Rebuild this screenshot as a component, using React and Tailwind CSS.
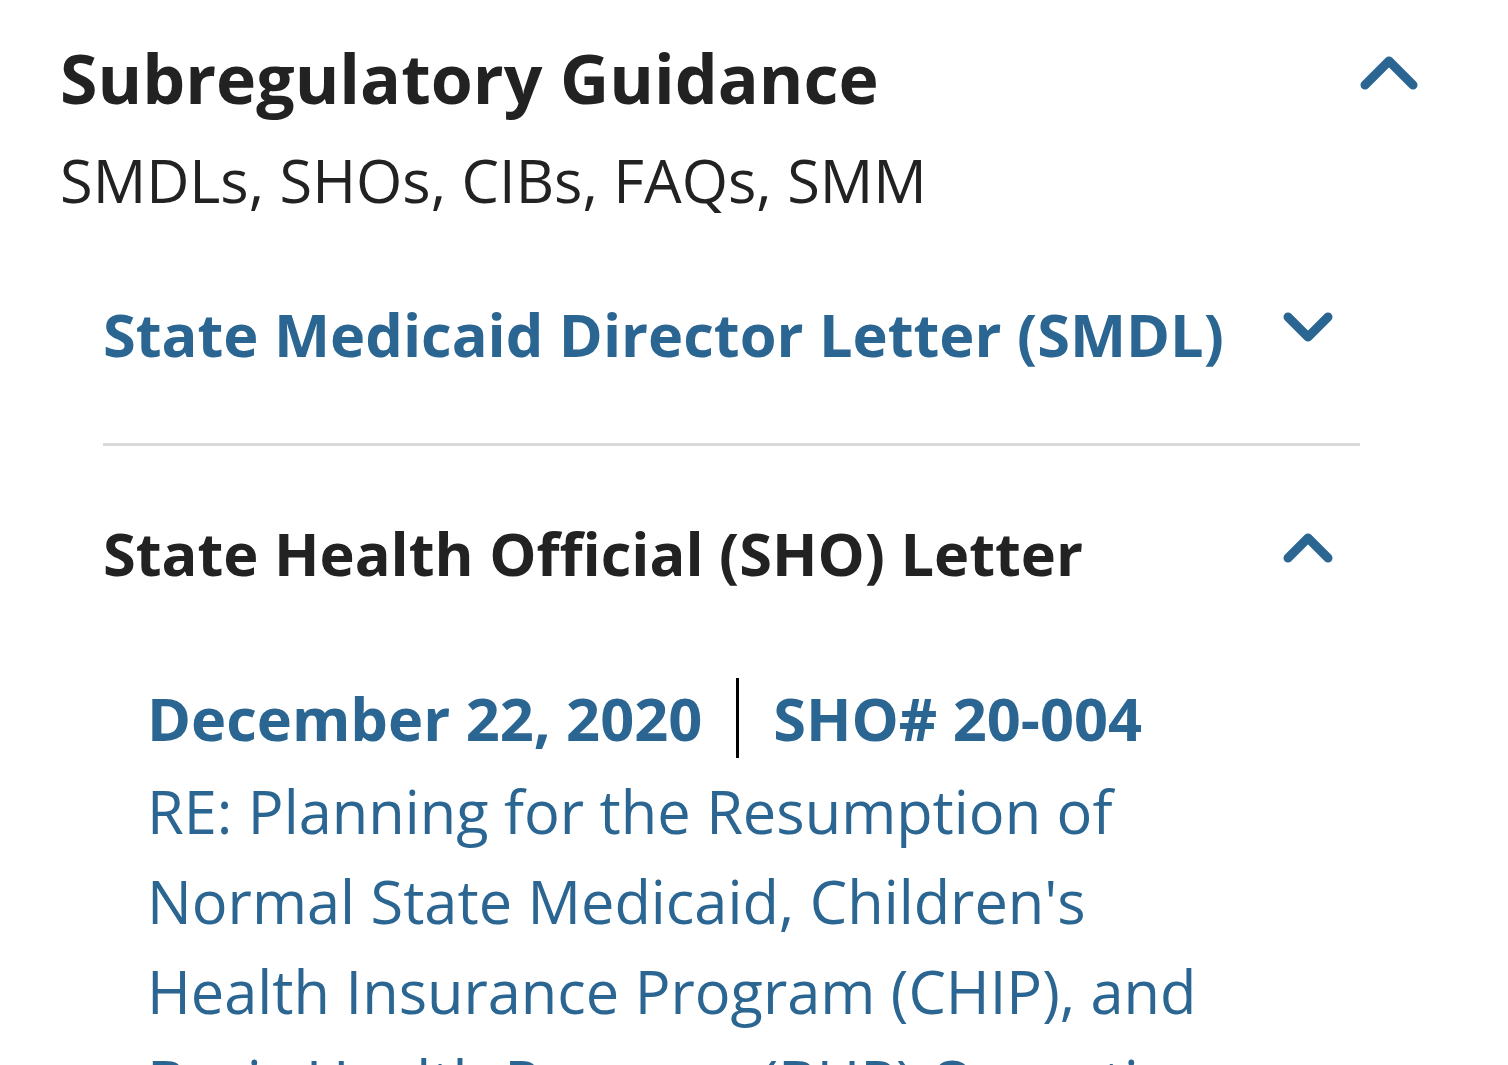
import React from "react";

const blue = "text-[#2b6591]";

function Chevron({ up = true, big = false }) {
  // chevron drawn as a thick rounded polyline
  const w = big ? 58 : 50;
  const h = big ? 35 : 31;
  const pts = up
    ? big
      ? "5,30 29,6 53,30"
      : "5,26 25,6 45,26"
    : big
    ? "5,5 29,29 53,5"
    : "5,5 25,25 45,5";
  return (
    <svg width={w} height={h} viewBox={`0 0 ${w} ${h}`} className="shrink-0">
      <polyline
        points={pts}
        fill="none"
        stroke="#2b6591"
        strokeWidth="9"
        strokeLinecap="round"
        strokeLinejoin="round"
      />
    </svg>
  );
}

export default function App() {
  return (
    <div className="min-h-screen bg-white font-['Open_Sans',sans-serif] text-[#222] pl-[60px] pr-[90px] pt-[38px] overflow-hidden h-[1065px]">
      {/* section header */}
      <div className="flex items-start justify-between">
        <h2 className="text-[68px] leading-[80px] font-bold">Subregulatory Guidance</h2>
        <div className="mt-[17px]">
          <Chevron up big />
        </div>
      </div>
      <p className="mt-[22px] text-[59.5px] leading-[80px]">SMDLs, SHOs, CIBs, FAQs, SMM</p>

      <div className="ml-[43px] mr-[58px] mt-[74px]">
        {/* collapsed item */}
        <div className="flex items-start justify-between pr-[27px] pb-[69px] border-b-[3px] border-[#d9d9d9]">
          <h3 className={`text-[59.5px] leading-[80px] font-bold ${blue}`}>
            State Medicaid Director Letter (SMDL)
          </h3>
          <div className="mt-[18px]">
            <Chevron up={false} />
          </div>
        </div>

        {/* expanded item */}
        <div className="mt-[67px] flex items-start justify-between pr-[27px]">
          <h3 className="text-[59.5px] leading-[80px] font-bold">State Health Official (SHO) Letter</h3>
          <div className="mt-[19px]">
            <Chevron up />
          </div>
        </div>

        <div className="ml-[44px] mt-[85px] w-[1120px]">
          <div className={`flex items-center text-[59.5px] leading-[80px] font-bold ${blue}`}>
            <span>December 22, 2020</span>
            <span className="mx-[34px] w-[3px] h-[80px] bg-black" />
            <span>SHO# 20-004</span>
          </div>
          <p className={`mt-[8px] text-[59.5px] leading-[90px] ${blue}`}>
            RE: Planning for the Resumption of Normal State Medicaid, Children's Health Insurance
            Program (CHIP), and Basic Health Program (BHP) Operations Upon Conclusion of the
            COVID-19 Public Health Emergency
          </p>
        </div>
      </div>
    </div>
  );
}
